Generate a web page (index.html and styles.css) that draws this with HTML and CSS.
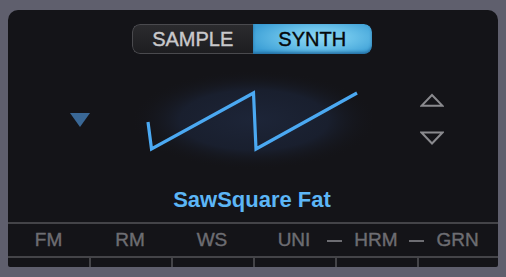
FILE: index.html
```html
<!DOCTYPE html>
<html>
<head>
<meta charset="utf-8">
<link rel="stylesheet" href="styles.css">
</head>
<body>
<div class="panel">
  <div class="toggle-row">
    <div class="toggle">
      <div class="seg seg-off">SAMPLE</div>
      <div class="seg seg-on">SYNTH</div>
    </div>
  </div>
  <div class="stage">
    <div class="cell-left"><div class="tri-down"></div></div>
    <div class="cell-wave">
      <svg width="240" height="116" viewBox="0 0 240 116">
        <defs>
          <radialGradient id="glow" cx="0.5" cy="0.5" r="0.5">
            <stop offset="0" stop-color="#1d2538"/>
            <stop offset="0.6" stop-color="#191f2e"/>
            <stop offset="1" stop-color="#141418" stop-opacity="0"/>
          </radialGradient>
        </defs>
        <ellipse cx="121" cy="66" rx="124" ry="50" fill="url(#glow)"/>
        <polyline points="15,68 18.5,95 120.5,39 123,95 224,39" fill="none" stroke="#4ba9f2" stroke-width="3.2" stroke-linejoin="miter"/>
      </svg>
    </div>
    <div class="cell-right">
      <svg width="24" height="54" viewBox="0 0 24 54">
        <polygon points="12,2 22.5,12.8 1.5,12.8" fill="none" stroke="#8a8a8e" stroke-width="2"/>
        <polygon points="1.5,39.5 22.5,39.5 12,50.5" fill="none" stroke="#8a8a8e" stroke-width="2"/>
      </svg>
    </div>
    <div class="title">SawSquare Fat</div>
  </div>
  <div class="tabs">
    <div class="tab">FM</div>
    <div class="tab">RM</div>
    <div class="tab">WS</div>
    <div class="tab">UNI</div>
    <div class="tab dash">HRM</div>
    <div class="tab dash">GRN</div>
  </div>
  <div class="strip">
    <div class="slot"></div>
    <div class="slot"></div>
    <div class="slot"></div>
    <div class="slot"></div>
    <div class="slot"></div>
    <div class="slot"></div>
  </div>
</div>
</body>
</html>
```
FILE: styles.css
```css
html, body {
  margin: 0;
  padding: 0;
}
body {
  width: 506px;
  height: 277px;
  background: #5f5f6d;
  font-family: "Liberation Sans", Arial, sans-serif;
  overflow: hidden;
  padding-top: 10px;
  padding-left: 8px;
  box-sizing: border-box;
}
.panel {
  width: 490px;
  height: 257px;
  background: #141418;
  border-radius: 10px 10px 2px 2px;
  display: flex;
  flex-direction: column;
}
.toggle-row {
  display: flex;
  justify-content: center;
  padding-top: 14px;
  padding-right: 2px;
}
.toggle {
  display: flex;
  width: 240px;
  height: 30px;
  border-radius: 8px;
  overflow: hidden;
  box-sizing: border-box;
}
.seg {
  flex: 1;
  display: flex;
  align-items: center;
  justify-content: center;
  font-size: 20px;
  line-height: 30px;
  box-sizing: border-box;
  -webkit-text-stroke: 0.4px currentColor;
}
.seg-off {
  color: #c9c9cc;
  background: linear-gradient(#2b2b2e, #1d1d20);
  border: 1.5px solid #4a4a4e;
  border-right: none;
  border-radius: 8px 0 0 8px;
}
.seg-on {
  color: #06080a;
  background: radial-gradient(ellipse 60% 70% at 55% 45%, #8fd8f2 0%, #6cc3ea 45%, #3c9fd6 100%);
  box-shadow: inset 0 -2px 3px rgba(20, 80, 130, 0.6);
  border-radius: 0 8px 8px 0;
}
.stage {
  display: grid;
  grid-template-columns: 125px 240px 125px;
  grid-template-rows: 116px 52px;
}
.cell-left {
  padding-left: 62px;
  padding-top: 59px;
}
.tri-down {
  width: 0;
  height: 0;
  border-left: 10px solid transparent;
  border-right: 10px solid transparent;
  border-top: 14px solid #3a6896;
}
.cell-wave svg {
  display: block;
}
.cell-right {
  padding-left: 47px;
  padding-top: 39px;
}
.cell-right svg {
  display: block;
}
.title {
  grid-column: 1 / 4;
  text-align: center;
  font-weight: bold;
  font-size: 22px;
  color: #5cb6f6;
  line-height: 26px;
  padding-top: 17px;
  padding-right: 2px;
}
.tabs {
  display: grid;
  grid-template-columns: 81px 82px 82px 82px 82px 81px;
  border-top: 2px solid #444448;
  border-bottom: 2px solid #444448;
  height: 32px;
}
.tab {
  position: relative;
  text-align: center;
  font-size: 19px;
  line-height: 32px;
  color: #6d6d72;
  -webkit-text-stroke: 0.4px currentColor;
}
.tab.dash::before {
  content: "";
  position: absolute;
  left: -8px;
  top: 16px;
  width: 15px;
  height: 2px;
  background: #6d6d72;
}
.strip {
  display: grid;
  grid-template-columns: 81px 82px 82px 82px 82px 81px;
  flex: 1;
}
.slot + .slot {
  border-left: 2px solid #444448;
}
```
